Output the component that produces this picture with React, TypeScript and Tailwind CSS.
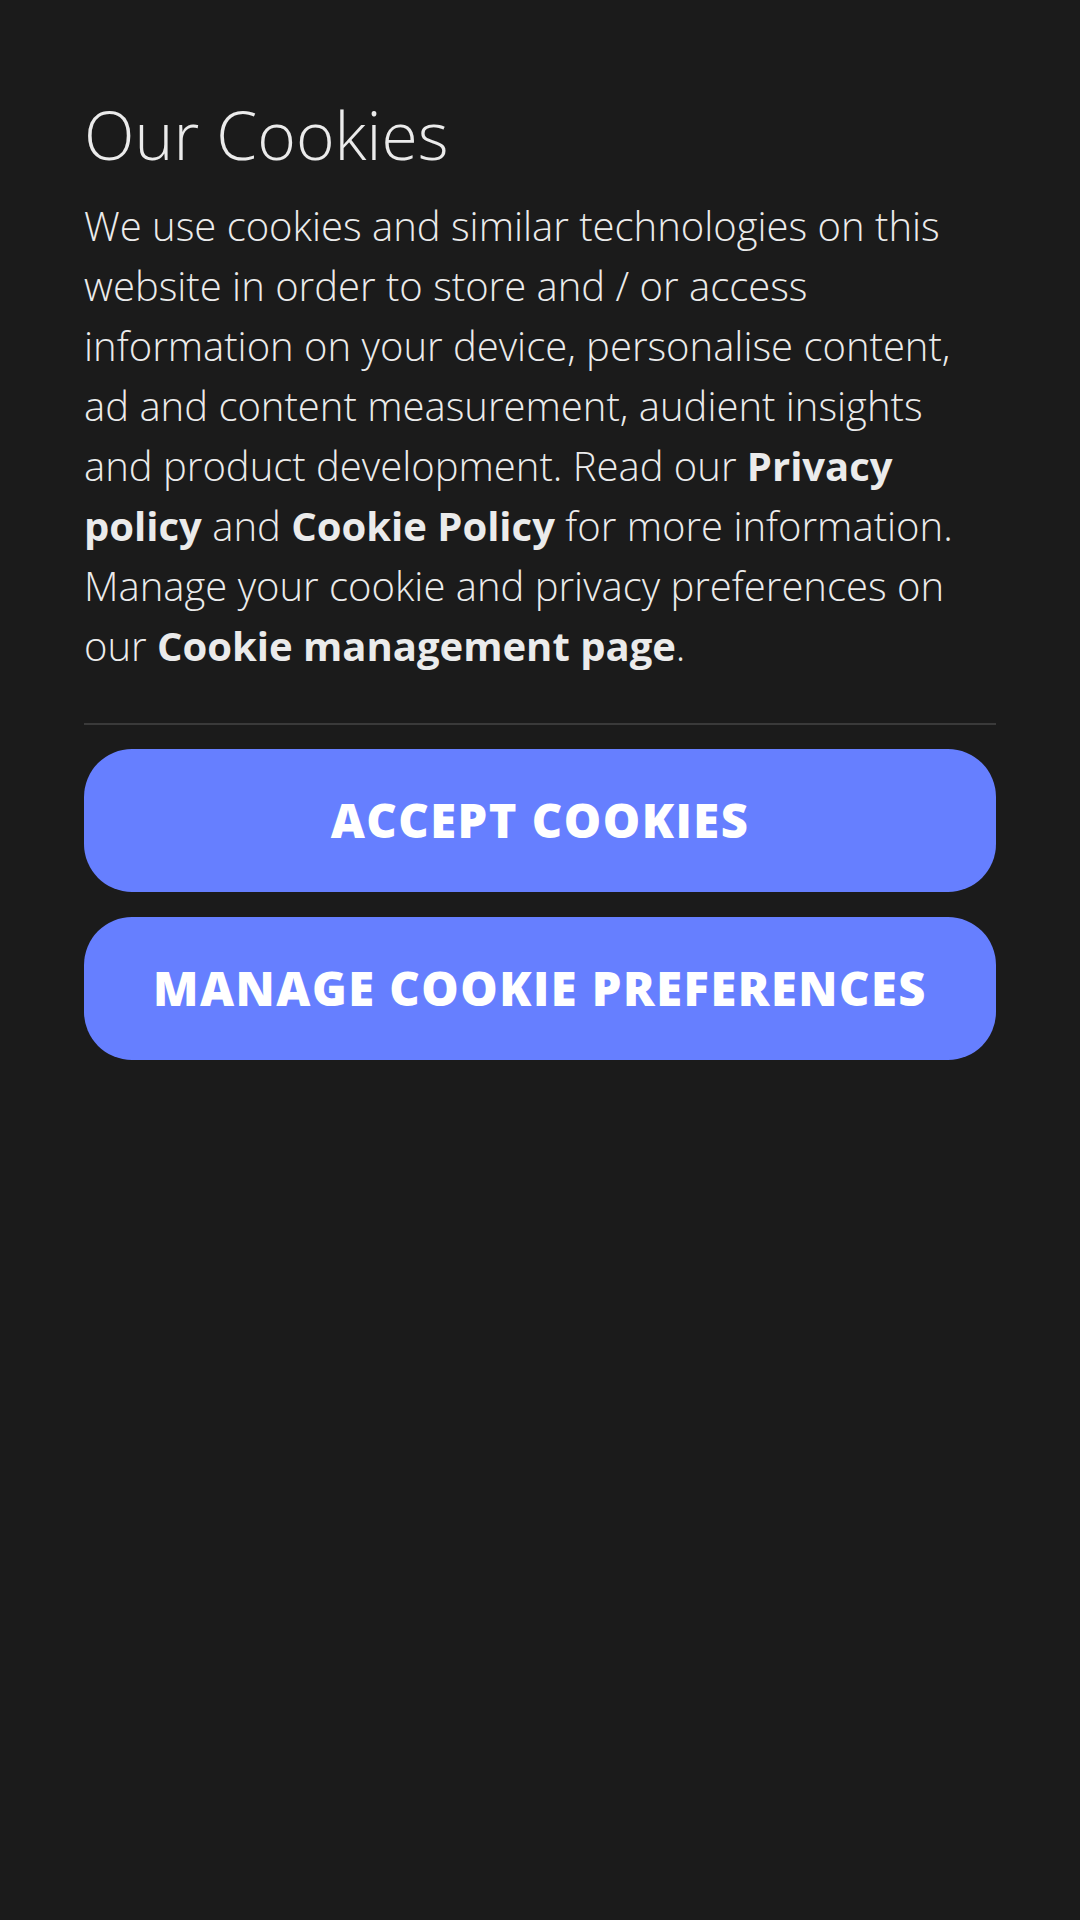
export default function App() {
  return (
    <div className="min-h-[1920px] w-full bg-[#1b1b1b] px-[84px] pt-[95px] font-['Open_Sans','Liberation_Sans',sans-serif] text-[#ebebeb]">
      <h1 className="text-[66px] font-light leading-[1.2]">Our Cookies</h1>
      <p className="mt-[22px] text-[40px] font-light leading-[60px]">
        We use cookies and similar technologies on this website in order to
        store and / or access information on your device, personalise content,
        ad and content measurement, audient insights and product development.
        Read our <a className="font-bold">Privacy policy</a> and{" "}
        <a className="font-bold">Cookie Policy</a> for more information.
        Manage your cookie and privacy preferences on our{" "}
        <a className="font-bold">Cookie management page</a>.
      </p>
      <div className="mt-[47px] h-[2px] bg-[#3a3a3a]" />
      <div className="mt-[24px] flex flex-col gap-[25px]">
        <button
          type="button"
          className="flex h-[143px] items-center justify-center rounded-[48px] bg-[#667fff] text-[47px] font-extrabold uppercase tracking-[1.5px] text-white"
        >
          Accept cookies
        </button>
        <button
          type="button"
          className="flex h-[143px] items-center justify-center rounded-[48px] bg-[#667fff] text-[47px] font-extrabold uppercase tracking-[1.5px] text-white"
        >
          Manage cookie preferences
        </button>
      </div>
    </div>
  );
}
